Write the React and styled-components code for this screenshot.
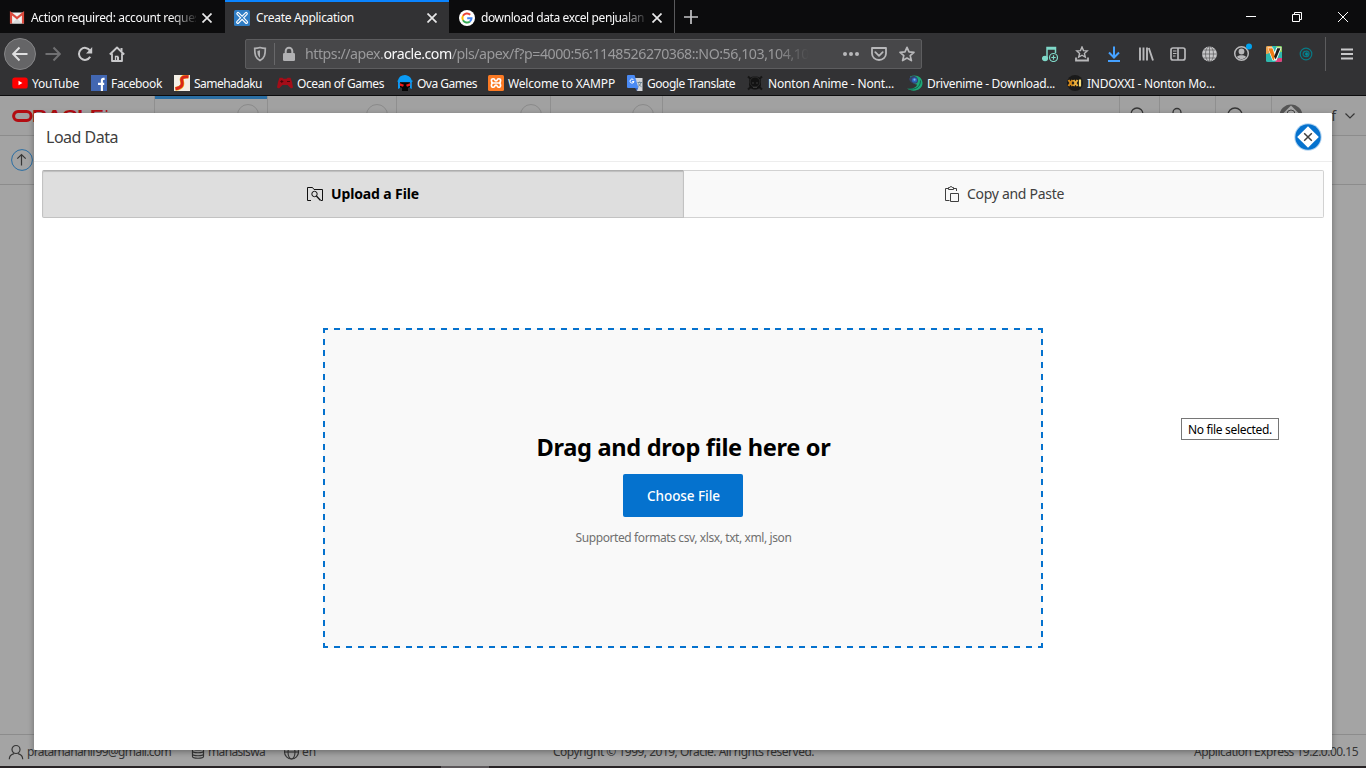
import React, { useLayoutEffect, useRef, useState } from "react";
import styled, { createGlobalStyle, css } from "styled-components";

const GlobalStyle = createGlobalStyle`
  *, *::before, *::after { box-sizing: border-box; }
  html, body { margin: 0; height: 100%; overflow: hidden; }
  body { font-family: "Noto Sans", "Open Sans", sans-serif; font-size: 12px; }
  svg { display: block; flex: none; }
`;

/* ---------- text with an even measure ---------- */

const Measure = styled.span`
  display: inline-block;
  white-space: pre;
`;

function Label({ width, children }) {
  const ref = useRef(null);
  const [spacing, setSpacing] = useState(0);
  useLayoutEffect(() => {
    const el = ref.current;
    const natural = el.getBoundingClientRect().width;
    setSpacing((width - natural) / el.textContent.length);
  }, [width]);
  return (
    <Measure ref={ref} style={{ letterSpacing: `${spacing}px` }}>
      {children}
    </Measure>
  );
}

/* ---------- browser chrome ---------- */

const Screen = styled.div`
  width: 1366px;
  height: 768px;
  display: flex;
  flex-direction: column;
  overflow: hidden;
`;

const TabStrip = styled.div`
  height: 33px;
  flex: none;
  display: flex;
  background: #0c0c0d;
`;

const Tab = styled.div`
  width: ${(p) => p.$width}px;
  display: flex;
  align-items: center;
  padding: 2px 0 0 ${(p) => p.$indent}px;
  color: #f9f9fa;
  ${(p) =>
    p.$active &&
    css`
      background: #323234;
      box-shadow: inset 0 2px #0a84ff;
    `}
  ${(p) => p.$divided && css`border-right: 1px solid #5a5a5c;`}
`;

const TabTitle = styled.div`
  width: 165px;
  margin-left: 6px;
  overflow: hidden;
  line-height: 18px;
  ${(p) =>
    p.$fade &&
    css`
      mask-image: linear-gradient(90deg, #000 ${p.$fade}px, transparent 168px);
    `}
`;

const TabClose = styled.div`
  margin-left: 6px;
`;

const NewTab = styled.div`
  width: 31px;
  display: grid;
  place-items: center;
`;

const WindowButtons = styled.div`
  margin-left: auto;
  display: grid;
  grid-template-columns: repeat(3, 46px);
  place-items: center;
`;

const NavBar = styled.div`
  height: 41px;
  flex: none;
  display: flex;
  align-items: center;
  background: #323234;
  color: #b1b1b3;
`;

const BackButton = styled.div`
  width: 32px;
  height: 32px;
  flex: none;
  margin-left: 4px;
  border-radius: 50%;
  border: 1px solid #858587;
  background: #656567;
  display: grid;
  place-items: center;
`;

const NavIcons = styled.div`
  display: flex;
  flex: none;
  gap: 16px;
  margin-left: 9px;
`;

const UrlBar = styled.div`
  width: 677px;
  height: 30px;
  flex: none;
  margin: 0 0 0 120px;
  border: 1px solid #5d5d5f;
  border-radius: 2px;
  background: #474749;
  display: flex;
  align-items: center;
  padding-left: 6px;
`;

const UrlDivider = styled.div`
  width: 1px;
  height: 22px;
  margin: 0 6px 0 6px;
  background: #68686a;
`;

const UrlText = styled.div`
  width: 504px;
  margin-left: 8px;
  overflow: hidden;
  font-size: 14.2px;
  line-height: 22px;
  color: #9a9a9c;
  mask-image: linear-gradient(90deg, #000 470px, transparent 504px);
`;

const Domain = styled.b`
  font-weight: 400;
  color: #f9f9fa;
`;

const UrlActions = styled.div`
  display: flex;
  gap: 12px;
  margin-left: 34px;
`;

const Tools = styled.div`
  width: 288px;
  flex: none;
  margin-left: 112px;
  display: grid;
  grid-template-columns: repeat(9, 32px);
  place-items: center;
`;

const MenuButton = styled.div`
  width: 41px;
  height: 34px;
  flex: none;
  margin-left: 3px;
  padding-left: 2px;
  border-left: 1px solid #5c5c5e;
  display: grid;
  place-items: center;
`;

const Bookmarks = styled.div`
  height: 22px;
  flex: none;
  padding-left: 12px;
  display: grid;
  grid-template-columns: 79px 83px 103px 120px 91px 139px 120px 160px 160px 180px;
  background: #323234;
  color: #f9f9fa;
  border-bottom: 1px solid #0c0c0d;
`;

const Bookmark = styled.div`
  display: flex;
  align-items: flex-start;
  gap: ${(p) => p.$gap || 4}px;
  line-height: 19px;
`;

const BookmarkIcon = styled.div`
  padding-top: 1px;
`;

/* ---------- application page ---------- */

const Page = styled.div`
  position: relative;
  height: 670px;
  flex: none;
  display: flex;
  flex-direction: column;
  background: #a4a4a4;
  color: #363636;
`;

const AppHeader = styled.div`
  height: 40px;
  flex: none;
  display: flex;
  background: #a1a1a1;
  border-bottom: 1px solid #8c8c8c;
`;

const HeaderCell = styled.div`
  width: ${(p) => p.$width}px;
  display: flex;
  justify-content: ${(p) => p.$justify || "flex-end"};
  padding: 8px ${(p) => p.$pad || 0}px 0 0;
  border-right: 1px solid #8f8f8f;
  ${(p) => p.$current && css`box-shadow: inset 0 3px #2a6ea3;`}
`;

const LogoBox = styled.div`
  padding: 4px 0 0 12px;
`;

const Ring = styled.div`
  width: 22px;
  height: 22px;
  border-radius: 50%;
  border: 1px solid #8a8a8a;
`;

const HeaderTools = styled.div`
  margin-left: auto;
  display: flex;
  border-left: 1px solid #8f8f8f;
`;

const UserMenu = styled.div`
  width: 94px;
  display: flex;
  padding: 8px 0 0 7px;
  font-size: 14px;
`;

const UserName = styled.span`
  margin: 3px 9px 0 auto;
  line-height: 18px;
`;

const Chevron = styled.div`
  padding: 7px 11px 0 0;
`;

const SubHeader = styled.div`
  height: 49px;
  flex: none;
  padding: 13px 0 0 11px;
  background: #a3a3a3;
  border-bottom: 1px solid #8c8c8c;
`;

const PageFooter = styled.div`
  height: 32px;
  margin-top: auto;
  border-top: 1px solid #8c8c8c;
  padding: 2px 8px 0 8px;
  display: grid;
  grid-template-columns: 545px 1fr auto;
  align-items: center;
  line-height: 17px;
`;

const FooterInfo = styled.div`
  display: flex;
  align-items: center;
`;

const FooterItem = styled.div`
  display: flex;
  align-items: center;
  gap: 3px;
  width: ${(p) => p.$width}px;
`;

const TaskbarEdge = styled.div`
  height: 2px;
  flex: none;
  display: flex;
  padding-left: 441px;
  background: #282426;
`;

const ActiveTask = styled.div`
  width: 48px;
  background: #5b5759;
`;

/* ---------- dialog ---------- */

const Dialog = styled.div`
  position: absolute;
  left: 34px;
  top: 17px;
  width: 1298px;
  height: 637px;
  background: #fff;
  box-shadow: 0 2px 6px rgba(0, 0, 0, 0.35);
  display: flex;
  flex-direction: column;
  border-radius: 1px;
`;

const DialogHeader = styled.div`
  height: 49px;
  flex: none;
  display: flex;
  justify-content: space-between;
  align-items: center;
  padding: 0 9px 0 12px;
  border-bottom: 1px solid #ededed;
  font-size: 16px;
  color: #404040;
`;

const Switcher = styled.div`
  height: 48px;
  margin: 8px;
  flex: none;
  display: grid;
  grid-template-columns: 642px 640px;
`;

const SwitchOption = styled.div`
  display: flex;
  align-items: center;
  justify-content: center;
  gap: 7px;
  padding: 0 0 1px 1px;
  font-size: 14px;
  line-height: 18px;
  color: #404040;
  background: #f9f9f9;
  border: 1px solid #d2d2d2;
  border-left: 0;
  border-radius: 0 2px 2px 0;
  ${(p) =>
    p.$selected &&
    css`
      padding: 0 1px 1px 0;
      color: #000;
      font-weight: 700;
      background: #dedede;
      border: 1px solid #c2c2c2;
      border-top-color: #adadad;
      border-radius: 2px 0 0 2px;
      box-shadow: inset 0 1px 1px rgba(0, 0, 0, 0.15);
    `}
`;

const DropZone = styled.div`
  width: 720px;
  height: 320px;
  margin: 102px 0 0 289px;
  display: flex;
  flex-direction: column;
  align-items: center;
  padding-top: 102px;
  --h: repeating-linear-gradient(90deg, #0572ce 0 5px, transparent 5px 10.933px, #0572ce 10.933px 11.933px);
  --v: repeating-linear-gradient(180deg, #0572ce 0 5px, transparent 5px 10.704px, #0572ce 10.704px 11.704px);
  background:
    var(--h) 0 0 / 100% 2px no-repeat,
    var(--h) 0 100% / 100% 2px no-repeat,
    var(--v) 0 0 / 2px 100% no-repeat,
    var(--v) 100% 0 / 2px 100% no-repeat,
    #f9f9f9;
`;

const DropTitle = styled.div`
  font-size: 23.6px;
  font-weight: 700;
  line-height: 34px;
  padding-left: 1px;
  color: #000;
`;

const ChooseButton = styled.div`
  width: 120px;
  height: 43px;
  margin-top: 10px;
  padding-left: 1px;
  border-radius: 2px;
  background: #0572ce;
  color: #fff;
  font-size: 13.5px;
  font-weight: 500;
  display: grid;
  place-items: center;
`;

const Formats = styled.div`
  margin-top: 12px;
  line-height: 18px;
  padding-left: 1px;
  color: #707070;
`;

const Tooltip = styled.div`
  position: absolute;
  left: 1147px;
  top: 305px;
  width: 98px;
  height: 22px;
  border: 1px solid #767676;
  background: #fff;
  color: #000;
  line-height: 21px;
  padding-left: 6px;
`;

/* ---------- drawings ---------- */

const Stroke = ({ size = 16, w = 2, color = "currentColor", box = 16, children }) => (
  <svg width={size} height={size} viewBox={`0 0 ${box} ${box}`} fill="none" stroke={color} strokeWidth={w}>
    {children}
  </svg>
);

const CloseX = () => (
  <Stroke size={10} box={10} w={1.7} color="#e8e8e9"><path d="M.5.5l9 9M9.5.5l-9 9" /></Stroke>
);

const Gmail = () => (
  <svg width="16" height="16" viewBox="0 0 16 16">
    <path d="M1 2.5h14v11H1z" fill="#f2f2f2" />
    <path d="M3 13.5L8 8.5l5 5z" fill="#dcdcdc" />
    <path d="M2 13.5V3.2L8 8l6-4.8v10.3" fill="none" stroke="#dc4a3d" strokeWidth="2.2" />
  </svg>
);

const Apex = () => (
  <svg width="16" height="16" viewBox="0 0 16 16" fill="none">
    <rect width="16" height="16" rx="1.5" fill="#2f7dc4" />
    <path d="M4 3.6L12.4 12.2M12.2 3.6L3.8 12.2" stroke="#fff" strokeWidth="3.4" strokeLinecap="round" />
    <path d="M4 3.6L12.4 12.2M12.2 3.6L3.8 12.2" stroke="#2f7dc4" strokeWidth="1.1" strokeLinecap="round" />
  </svg>
);

const Google = () => (
  <svg width="16" height="16" viewBox="0 0 16 16" fill="none" strokeWidth="2">
    <circle cx="8" cy="8" r="8" fill="#fff" />
    <path d="M11.2 4.7A4.6 4.6 0 004 5.8" stroke="#ea4335" />
    <path d="M4 5.8a4.6 4.6 0 000 4.5" stroke="#fbbc05" />
    <path d="M4 10.3a4.6 4.6 0 006.9 1.2" stroke="#34a853" />
    <path d="M10.9 11.5c1.2-1 1.6-2.2 1.6-3.3H8.2" stroke="#4285f4" />
  </svg>
);

const YouTube = () => (
  <svg width="16" height="16" viewBox="0 0 16 16">
    <rect x=".3" y="2.5" width="15.4" height="11" rx="2.6" fill="#f00" />
    <path d="M6.5 5.7v4.6L10.4 8z" fill="#fff" />
  </svg>
);

const Facebook = () => (
  <svg width="16" height="16" viewBox="0 0 16 16">
    <path d="M0 0h16v16H0z" fill="#4267b2" />
    <path d="M13.6 3.9h-1.3c-1.1 0-1.4.6-1.4 1.5V16M7 8.9h6.2" fill="none" stroke="#fff" strokeWidth="2.1" />
  </svg>
);

const Samehadaku = () => (
  <svg width="16" height="16" viewBox="0 0 16 16" fill="none">
    <path d="M0 0h16v16H0z" fill="#f4efe6" />
    <path d="M14.5 1.6c-5.4-.5-7.6 1-6.6 4.2.8 3.4 1.5 6.6-6.6 8.1" stroke="#f3b41b" strokeWidth="4" />
    <path d="M14.5 1.8c-5.4-.5-7.6 1-6.6 4.2.8 3.4.6 6.4-6.4 7.7" stroke="#d9261c" strokeWidth="3" />
  </svg>
);

const Gamepad = () => (
  <svg width="16" height="16" viewBox="0 0 16 16">
    <path d="M2.5 2.8h3l1 1h3l1-1h3L15 7l1 5.5-2 1-3.5-3.5h-5L2 13.5l-2-1L1 7z" fill="#a40d18" />
    <path d="M3.3 6.5h3M4.8 5v3M10 6.5h3" stroke="#4d060c" strokeWidth="1" />
  </svg>
);

const OvaGames = () => (
  <svg width="16" height="16" viewBox="0 0 16 16">
    <path d="M1 14V6C1.5 2 4 .3 8 0c4 .3 6.500 3 6.800 6v8l-2-1V7H3v6z" fill="#0a9bf5" />
    <path d="M.5 5.500h15v1.300H.5z" fill="#0a9bf5" />
    <path d="M3 7.500h10V12l-2 1v3H5v-3l-2-1z" fill="#050505" />
    <path d="M2.500 8l4.500 1.700-1 2-3-1zM13.500 8L9 9.700l1 2 3-1z" fill="#f01818" />
  </svg>
);

const Xampp = () => (
  <svg width="16" height="16" viewBox="0 0 16 16" fill="none">
    <rect width="16" height="16" rx="1.5" fill="#fb7a24" />
    <path d="M5.5 3.8C2.8 3.3 2.8 7.5 5 8c-2.2.5-2.2 4.7.5 4.2M10.5 3.8c2.7-.5 2.7 3.7.5 4.2 2.2.5 2.2 4.7-.5 4.2M5 8h6M5.5 3.9c2 0 .5 1.9 2.5 1.9s.5-1.9 2.5-1.9M5.5 12.1c2 0 .5-1.9 2.5-1.9s.5 1.9 2.5 1.9" stroke="#fff" strokeWidth="1.7" />
  </svg>
);

const Translate = () => (
  <svg width="16" height="16" viewBox="0 0 16 16" fill="none">
    <path d="M6 3h9.5v13H10z" fill="#d3d5d9" />
    <path d="M8 13h3l-1 3z" fill="#3060c0" />
    <path d="M1 0h6.5l4 13H1a1 1 0 01-1-1V1a1 1 0 011-1z" fill="#4a8af4" />
    <path d="M6.5 4.7A2 2 0 107 6.5H5.2" stroke="#fff" strokeWidth="1" />
    <path d="M10.5 7.5h4.5M12.7 6.5v1M14 7.5c-.5 2-2 3.5-3 4M11.5 8.5c.5 1.5 2 2.7 3 3.2" stroke="#6d8797" />
  </svg>
);

const Skull = () => (
  <svg width="16" height="16" viewBox="0 0 16 16" fill="none">
    <path d="M1 1.5l14 13M15 1.5l-14 13" stroke="#161616" strokeWidth="2" />
    <rect x="2" y="1.5" width="12" height="13" rx="5" fill="#121212" />
    <circle cx="8" cy="7" r="5" stroke="#2b2b2b" />
    <path d="M5 8h2M9 8h2M6 12.5h4" stroke="#3a3a3a" />
  </svg>
);

const Drivenime = () => (
  <svg width="16" height="16" viewBox="0 0 16 16">
    <path d="M3 1.5C9-1.5 15.5 2 15.5 8c0 7-9 10-15.5 5.5 5 .8 9.5-.8 10-4C8 9.5 5 8 3 4z" fill="#1ea878" />
    <path d="M2 13.8c6 1.2 11.5-1.3 11.5-8.3" fill="none" stroke="#0f604c" />
    <path d="M2 4c1-2.5 4-3.5 6.5-2.5S12 6 10 8 3 8 2 4z" fill="#35406b" />
    <circle cx="7.5" cy="5" r="2.6" fill="#2a66b9" />
    <circle cx="7.5" cy="4.7" r="1.1" fill="#7fb0e8" />
  </svg>
);

const Indoxxi = () => (
  <svg width="16" height="16" viewBox="0 0 16 16" fill="none">
    <circle cx="8" cy="8" r="8" fill="#1a1a1a" />
    <path d="M1.5 5l4 6M5.5 5l-4 6" stroke="#d58a1a" strokeWidth="2" />
    <path d="M6.5 5l4 6M10.5 5l-4 6" stroke="#e8ad3c" strokeWidth="2" />
    <path d="M13 4.5v7" stroke="#f5dc7a" strokeWidth="2.2" />
  </svg>
);

const OracleLogo = () => (
  <svg width="98" height="14" viewBox="0 0 98 14" fill="#b30d12">
    <rect x="1.6" y="3.6" width="17.5" height="8.8" rx="4.4" fill="none" stroke="#b30d12" strokeWidth="3" />
    <text x="20" y="14" fontSize="16.6" fontWeight="700" fontFamily="Liberation Sans, sans-serif" textLength="72" lengthAdjust="spacingAndGlyphs">RACLE</text>
    <circle cx="94.5" cy="3" r="1" />
  </svg>
);

const bookmarks = [
  [YouTube, "YouTube", 47],
  [Facebook, "Facebook", 51],
  [Samehadaku, "Samehadaku", 68],
  [Gamepad, "Ocean of Games", 87],
  [OvaGames, "Ova Games", 60],
  [Xampp, "Welcome to XAMPP", 107],
  [Translate, "Google Translate", 88],
  [Skull, "Nonton Anime - Nont...", 126, 5],
  [Drivenime, "Drivenime - Download...", 128],
  [Indoxxi, "INDOXXI - Nonton Mo...", 128],
];

const headerTabs = [
  { width: 113, current: true, pad: 8 },
  { width: 129, pad: 8 },
  { width: 154, pad: 8 },
  { width: 112, pad: 8 },
];

function BrowserChrome() {
  return (
    <>
      <TabStrip>
        <Tab $width={225} $indent={9}>
          <Gmail />
          <TabTitle $fade={140}><Label width={169}>Action required: account reques</Label></TabTitle>
          <TabClose><CloseX /></TabClose>
        </Tab>
        <Tab $width={224} $indent={9} $active>
          <Apex />
          <TabTitle><Label width={98}>Create Application</Label></TabTitle>
          <TabClose><CloseX /></TabClose>
        </Tab>
        <Tab $width={226} $indent={10} $divided>
          <Google />
          <TabTitle $fade={140}><Label width={163}>download data excel penjualan</Label></TabTitle>
          <TabClose><CloseX /></TabClose>
        </Tab>
        <NewTab>
          <Stroke size={14} box={14} w={1.7} color="#c4c4c6"><path d="M7 0v14M0 7h14" /></Stroke>
        </NewTab>
        <WindowButtons>
          <Stroke size={10} box={10} w={1} color="#fff"><path d="M0 4.5h10" /></Stroke>
          <Stroke size={10} box={10} w={1} color="#fff"><path d="M.5 2.5h7v7h-7zM2.5 2.5v-2h7v7h-2" /></Stroke>
          <Stroke size={10} box={10} w={1} color="#fff"><path d="M0 0l10 10M10 0L0 10" /></Stroke>
        </WindowButtons>
      </TabStrip>

      <NavBar>
        <BackButton>
          <Stroke color="#e0e0e1"><path d="M15.5 8H1.5M7.5 1.5L1.2 8l6.3 6.5" /></Stroke>
        </BackButton>
        <NavIcons>
          <Stroke color="#707072"><path d="M.5 8h14M8.5 1.5L14.8 8l-6.3 6.5" /></Stroke>
          <Stroke color="#c9c9cb"><path d="M13.2 10.8A6 6 0 1113 4.6" /><path d="M15.2 1v6.5H9l2.5-2.5z" fill="#c9c9cb" stroke="none" /></Stroke>
          <Stroke color="#c9c9cb" w={1.8}><path d="M.8 8.5L8 1.5l7.2 7M3 7.5V15h10V7.5" strokeLinejoin="round" /><path d="M12.5 2v3M9 15v-4" strokeWidth="2" /><path d="M6.5 15v-4.5h3" strokeWidth="1.3" /></Stroke>
        </NavIcons>
        <UrlBar>
          <Stroke w={1.7}><path d="M8 1.5c2 .6 3.7.8 5.3.8 0 6-.5 9.7-5.3 12.2C3.2 12 2.7 8.3 2.7 2.3c1.6 0 3.3-.2 5.3-.8z" /><path d="M8 4.3v7.5c-2-1.6-2.6-3.6-2.6-6.8z" fill="currentColor" stroke="none" /></Stroke>
          <UrlDivider />
          <Stroke><rect x="2" y="7" width="12" height="8" rx="1.3" fill="currentColor" stroke="none" /><path d="M4.7 8V5a3.3 3.3 0 016.6 0v3" /></Stroke>
          <UrlText>
            <Label width={504}>https://apex.<Domain>oracle.com</Domain>/pls/apex/f?p=4000:56:1148526270368::NO:56,103,104,10</Label>
          </UrlText>
          <UrlActions>
            <svg width="16" height="16" viewBox="0 0 16 16" fill="#b8b8ba"><circle cx="2" cy="8" r="2" /><circle cx="8" cy="8" r="2" /><circle cx="14" cy="8" r="2" /></svg>
            <Stroke color="#b8b8ba" w={1.8}><path d="M1 2h14v5.5a7 6.5 0 01-14 0zM4.3 6.2L8 9.8l3.7-3.6" strokeLinejoin="round" strokeLinecap="round" /></Stroke>
            <Stroke color="#b8b8ba" w={1.7}><path d="M8 1.3l2 4.6 5 .4-3.8 3.3 1.2 5L8 12l-4.4 2.6 1.2-5L1 6.3l5-.4z" strokeLinejoin="round" /></Stroke>
          </UrlActions>
        </UrlBar>
        <Tools>
          <Stroke color="#7fd8c8" w={1.5}><path d="M5 12.5V1.5h8.5V7M5 3h8.5" /><ellipse cx="3" cy="12.5" rx="2.3" ry="2" fill="#7fd8c8" /><circle cx="11.5" cy="11.5" r="4" strokeWidth="1.2" /><path d="M11.5 9.3v4.4M9.3 11.5h4.4" strokeWidth="1.2" /></Stroke>
          <Stroke w={1.4} color="#b8b8ba"><path d="M8 1l1.5 3.6 3.7.3-2.8 2.5.9 3.7L8 9.2l-3.3 1.9.9-3.7L2.8 4.9l3.7-.3z" /><path d="M2 11.5v3h12v-3" strokeWidth="1.8" /></Stroke>
          <Stroke color="#45a1ff"><path d="M8 .5V11M3 6.5l5 5 5-5M2 15h12" /></Stroke>
          <Stroke color="#b8b8ba" w={1.9}><path d="M2 1.5v13M5.5 1.5v13M9 1.5v13M10.8 2l4.2 12.5" /></Stroke>
          <Stroke color="#b8b8ba" w={1.7}><rect x="1" y="2" width="14" height="12" rx="2" /><path d="M8 2v12" /><path d="M3 5h3.5M3 7.5h3.5M3 10h2.5" strokeWidth="1" /></Stroke>
          <Stroke w={0.7} color="#5a5a5c"><circle cx="7.5" cy="8" r="7.5" fill="#c6c6c8" stroke="none" /><path d="M7.5 0v16M0 8h16M1.5 4h12M1.5 12h12" /><ellipse cx="7.5" cy="8" rx="4" ry="7.5" /></Stroke>
          <svg width="20" height="22" viewBox="0 0 20 22"><circle cx="9.5" cy="10.500" r="6.800" fill="none" stroke="#b8b8ba" strokeWidth="1.500" /><circle cx="9.500" cy="8.500" r="2.900" fill="#b8b8ba" /><path d="M5 14c.5-2.500 8.500-2.500 9 0-2.500 2.800-6.500 2.800-9 0z" fill="#b8b8ba" /><circle cx="17" cy="3.500" r="3" fill="#00a2ee" /></svg>
          <svg width="16" height="16" viewBox="0 0 16 16">
            <rect width="16" height="16" rx="1.500" fill="#2fb8ae" />
            <path d="M0 1.500A1.500 1.500 0 011.500 0H6v6L1 8H0z" fill="#f0a24c" />
            <path d="M10 0h4.500A1.500 1.500 0 0116 1.500V6h-3z" fill="#8ccf5a" />
            <path d="M9 16l3-4h4v2.500a1.500 1.500 0 01-1.500 1.500z" fill="#e3407c" />
            <path d="M1.500 1.500h5.500l1.500 4.500L10.500 1.500h5L10.500 14.500h-4z" fill="#fff" />
            <path d="M2.200 2.200H6.500L9 10l-1 4H7z" fill="#f07c14" />
            <path d="M11.200 2.200H14.500L9.700 13.500 8.200 10.500z" fill="#1c1c1c" />
          </svg>
          <Stroke w={1.2} color="#087985"><circle cx="8" cy="8" r="5.8" /><path d="M8 5.2c2-.4 3 .8 3 2.4 0 1.8-1 3-2.5 3-2 0-3.4-1-3.4-2.7 0-1.4 1.2-2.5 2.9-2.7z" /><circle cx="8.7" cy="8" r="1.2" fill="#09a1ad" /></Stroke>
        </Tools>
        <MenuButton>
          <Stroke size={12} box={12} w={1.9} color="#c9c9cb"><path d="M0 1.5h12M0 6h12M0 10.5h12" /></Stroke>
        </MenuButton>
      </NavBar>

      <Bookmarks>
        {bookmarks.map(([Icon, title, width, gap]) => (
          <Bookmark key={title} $gap={gap}>
            <BookmarkIcon><Icon /></BookmarkIcon>
            <Label width={width}>{title}</Label>
          </Bookmark>
        ))}
      </Bookmarks>
    </>
  );
}

function LoadDataDialog() {
  return (
    <Dialog>
      <DialogHeader>
        <Label width={72}>Load Data</Label>
        <svg width="29" height="29" viewBox="0 0 29 29">
          <circle cx="14" cy="14" r="13.7" fill="#7db5e6" opacity=".6" />
          <circle cx="14" cy="14" r="12.7" fill="#0572ce" />
          <path d="M14 3.200L24.800 14 14 24.800 3.200 14z" fill="#fff" />
          <path d="M10.200 10.200l7.600 7.600M17.800 10.200l-7.600 7.600" stroke="#404040" strokeWidth="1.500" />
        </svg>
      </DialogHeader>
      <Switcher>
        <SwitchOption $selected>
          <svg width="18" height="16" viewBox="0 0 18 16" fill="none" stroke="#111"><path d="M5 14.5H1.5v-13h5l1.5 2h8.500v11h-1.500" /><circle cx="8.500" cy="8" r="2.700" /><path d="M10.400 10l4.200 4.500" strokeWidth="1.300" /></svg>
          <Label width={88}>Upload a File</Label>
        </SwitchOption>
        <SwitchOption>
          <svg width="16" height="16" viewBox="0 0 16 16" fill="none" stroke="#404040"><path d="M5.5 14.5h-4v-12h3M9.500 2.500h3V5M4.500 3.500v-2h1.300c0-1.300 2.400-1.300 2.400 0h1.300v2zM6.500 7.500h8v8h-8z" /></svg>
          <Label width={97}>Copy and Paste</Label>
        </SwitchOption>
      </Switcher>
      <DropZone>
        <DropTitle><Label width={294}>Drag and drop file here or</Label></DropTitle>
        <ChooseButton><Label width={73}>Choose File</Label></ChooseButton>
        <Formats><Label width={216}>Supported formats csv, xlsx, txt, xml, json</Label></Formats>
      </DropZone>
      <Tooltip><Label width={84}>No file selected.</Label></Tooltip>
    </Dialog>
  );
}

export default function App() {
  return (
    <Screen>
      <GlobalStyle />
      <BrowserChrome />
      <Page>
        <AppHeader>
          <HeaderCell $width={155} $justify="flex-start">
            <LogoBox><OracleLogo /></LogoBox>
          </HeaderCell>
          {headerTabs.map((t) => (
            <HeaderCell key={t.width} $width={t.width} $current={t.current} $pad={t.pad}><Ring /></HeaderCell>
          ))}
          <HeaderTools>
            <HeaderCell $width={40} $pad={14}><Stroke w={1.3}><circle cx="8" cy="10" r="6" /></Stroke></HeaderCell>
            <HeaderCell $width={56} $justify="flex-start">
              <svg width="26" height="16" viewBox="0 0 26 16" fill="none" stroke="currentColor" strokeWidth="1.3"><circle cx="17" cy="8.5" r="4" /></svg>
            </HeaderCell>
            <HeaderCell $width={56} $pad={28}><Stroke w={1.3}><circle cx="8" cy="11" r="7" /></Stroke></HeaderCell>
            <UserMenu>
              <svg width="24" height="24" viewBox="0 0 24 24" fill="none"><circle cx="12" cy="12" r="11.5" fill="#555" /><path d="M12 1.5L22.5 12 12 22.5 1.5 12z" fill="#a8a8a8" /><circle cx="12" cy="10" r="4" stroke="#444" /></svg>
              <UserName>f</UserName>
              <Chevron><Stroke size={10} box={10} w={1.2}><path d="M.5 2.5L5 7l4.5-4.5" /></Stroke></Chevron>
            </UserMenu>
          </HeaderTools>
        </AppHeader>
        <SubHeader>
          <svg width="22" height="22" viewBox="0 0 22 22" fill="none"><circle cx="11" cy="11" r="10.4" stroke="#2a6ea3" /><path d="M10.5 16.5v-11M6.3 9.7l4.2-4.2 4.2 4.2" stroke="#363636" strokeWidth="1.2" /></svg>
        </SubHeader>
        <PageFooter>
          <FooterInfo>
            <FooterItem $width={183}>
              <Stroke w={1.2}><circle cx="8" cy="5.5" r="4" /><path d="M1.3 15.2c0-3.2 2-4.7 4.7-5.5M14.7 15.2c0-3.2-2-4.7-4.7-5.5" /></Stroke>
              <Label width={144}>pratamahanif99@gmail.com</Label>
            </FooterItem>
            <FooterItem $width={92}>
              <Stroke w={1.2} size={14} box={14}><ellipse cx="7" cy="3" rx="5.5" ry="2" /><path d="M1.5 3v8.5c0 2.300 11 2.300 11 0V3M1.500 6c0 2.300 11 2.300 11 0M1.500 9c0 2.300 11 2.300 11 0" /></Stroke>
              <Label width={57}>mahasiswa</Label>
            </FooterItem>
            <FooterItem $width={50}>
              <Stroke w={1.1}><circle cx="8.5" cy="8" r="7" /><ellipse cx="8.5" cy="8" rx="3.5" ry="7" /><path d="M1.5 8h14" /></Stroke>
              <Label width={14}>en</Label>
            </FooterItem>
          </FooterInfo>
          <div><Label width={261}>Copyright © 1999, 2019, Oracle. All rights reserved.</Label></div>
          <Label width={164}>Application Express 19.2.0.00.15</Label>
        </PageFooter>
        <LoadDataDialog />
      </Page>
      <TaskbarEdge><ActiveTask /></TaskbarEdge>
    </Screen>
  );
}
